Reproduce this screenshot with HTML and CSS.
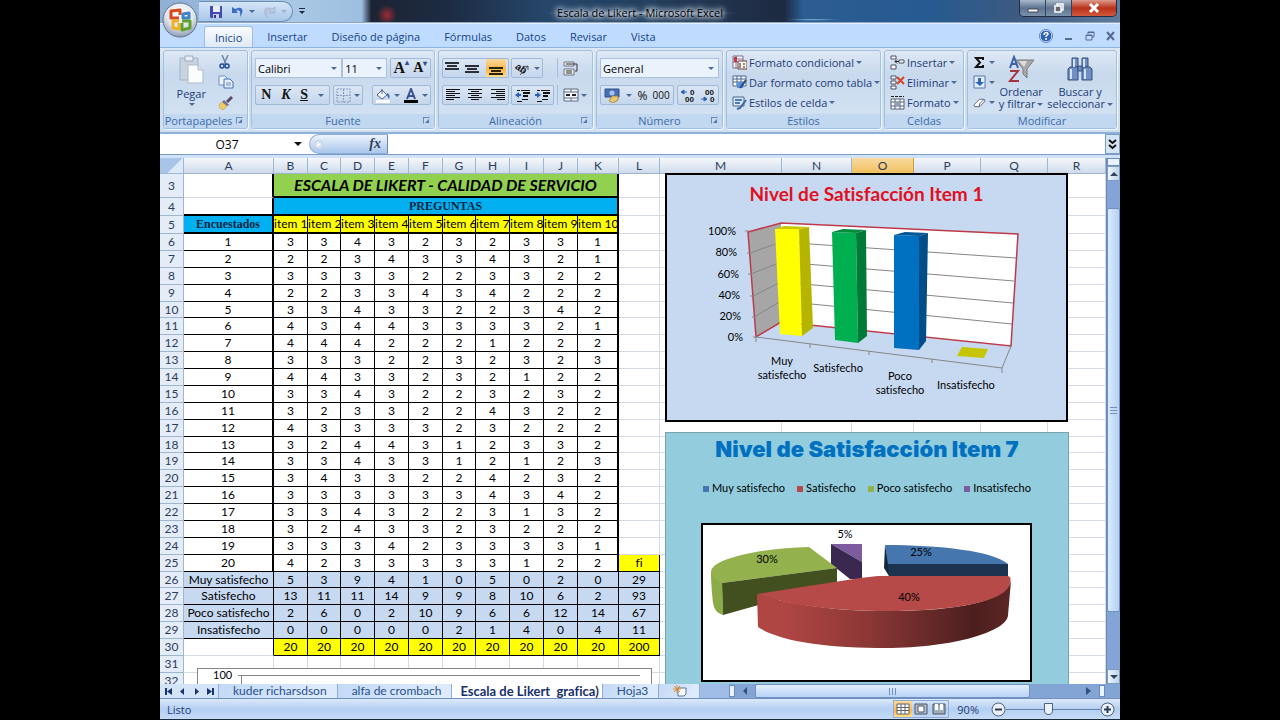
FILE: index.html
```html
<!DOCTYPE html>
<html lang="es">
<head>
    <meta charset="UTF-8">
    <title>Escala de Likert - Microsoft Excel</title>
    <link rel="stylesheet" href="styles.css">
</head>
<body>
<div class="window">
    <header class="titlebar">
        <button class="office" aria-label="Botón de Office">
            <svg width="36" height="36" viewBox="0 0 36 36">
                <defs>
                    <radialGradient id="orb" cx=".5" cy=".3" r=".7"><stop offset="0" stop-color="#fff"/><stop offset=".6" stop-color="#dfe3ea"/><stop offset="1" stop-color="#8e9cb4"/></radialGradient>
                </defs>
                <circle cx="18" cy="18" r="17" fill="url(#orb)" stroke="#5f7291"/>
                <g fill="none" stroke-width="3" stroke-linejoin="round">
                    <path d="M17 16H9V9l9-1v5" stroke="#d8481c"/>
                    <path d="M20 16h7v-5l-6 1v5" stroke="#3f83c8"/>
                    <path d="M17 19h-6v7l6 1v-6" stroke="#f0b020"/>
                    <path d="M20 19h8v7l-8 2v-7" stroke="#5fa12c"/>
                </g>
            </svg>
        </button>
        <div class="quick">
            <button aria-label="Guardar"><svg width="14" height="14" viewBox="0 0 14 14"><path d="M1 1h12v12H2l-1-1z" fill="#4248b0"/><path d="M4 1h7v6H4z" fill="#e8eefa"/><path d="M4 9h6v4H4z" fill="#c9d2ea"/><path d="M5 10h2v3H5z" fill="#32388c"/></svg></button>
            <button aria-label="Deshacer"><svg width="13" height="12" viewBox="0 0 13 12"><path d="M1 1v6h6L5 5c3-2 5 0 4 6 4-5 3-10-2-9L4 3z" fill="#3b6cc4"/></svg></button>
            <i class="arrow"></i>
            <button aria-label="Rehacer"><svg width="13" height="12" viewBox="0 0 13 12"><path d="M12 1v6H6l2-2C5 3 3 5 4 11 0 6 1 1 6 2l3 1z" fill="#b9c8de" stroke="#8fa3c2" stroke-width=".5"/></svg></button>
            <i class="arrow dim"></i>
        </div>
        <button class="more" aria-label="Personalizar barra"><i class="arrow"></i></button>
        <h1>Escala de Likert - Microsoft Excel</h1>
        <div class="winbtns">
            <button aria-label="Minimizar"><svg width="12" height="12" viewBox="0 0 12 12"><path d="M1 7h10v3H1z" fill="#fff" stroke="#445"/></svg></button>
            <button aria-label="Restaurar"><svg width="12" height="12" viewBox="0 0 12 12"><path d="M4 2h6v6H4z" fill="none" stroke="#fff" stroke-width="1.5"/><path d="M2 4h6v6H2z" fill="#667" stroke="#fff" stroke-width="1.5"/></svg></button>
            <button class="close" aria-label="Cerrar"><svg width="12" height="12" viewBox="0 0 12 12"><path d="M2 2l8 8M10 2l-8 8" stroke="#fff" stroke-width="3"/></svg></button>
        </div>
    </header>

    <nav class="tabs">
        <button class="active">Inicio</button>
        <button>Insertar</button>
        <button>Diseño de página</button>
        <button>Fórmulas</button>
        <button>Datos</button>
        <button>Revisar</button>
        <button>Vista</button>
        <div class="docbtns">
            <button aria-label="Ayuda"><svg width="14" height="14" viewBox="0 0 14 14"><circle cx="7" cy="7" r="6" fill="#2c62b8" stroke="#fff"/><circle cx="7" cy="7" r="6.5" fill="none" stroke="#5a82bd"/><path d="M5 6c0-3 4-3 4-1 0 1-2 1-2 3M7 9v2" fill="none" stroke="#fff" stroke-width="1.5"/></svg></button>
            <button aria-label="Minimizar libro"><svg width="10" height="10" viewBox="0 0 10 10"><path d="M1 8h7" stroke="#566b8c" stroke-width="2"/></svg></button>
            <button aria-label="Restaurar libro"><svg width="10" height="10" viewBox="0 0 10 10"><path d="M3 3V1h6v5H7M1 4h6v5H1zM1 4.5h6M3 1.5h6" fill="none" stroke="#566b8c"/></svg></button>
            <button aria-label="Cerrar libro"><svg width="10" height="10" viewBox="0 0 10 10"><path d="M1 1l7 8M8 1L1 9" stroke="#566b8c" stroke-width="2"/></svg></button>
        </div>
    </nav>

    <div class="ribbon">
        <section class="group">
            <div class="body clip">
                <button class="big">
                    <svg width="26" height="30" viewBox="0 0 26 30"><path d="M2 3h18v22H2z" fill="#c9d3e0" stroke="#a5b3c6"/><path d="M7 1h8v5H7z" fill="#e9eef5" stroke="#9aa9bd"/><path d="M10 10h10l5 5v13H10z" fill="#fbfcfe" stroke="#a9b8cc"/><path d="M20 10v5h5" fill="#dde5ef" stroke="#a9b8cc"/></svg>
                    <span>Pegar</span>
                    <i class="arrow"></i>
                </button>
                <div class="stack">
                    <button aria-label="Cortar"><svg width="14" height="14" viewBox="0 0 14 14"><path d="M4 0l4 9M10 0L6 9" stroke="#6f86ad" stroke-width="1.5"/><circle cx="4" cy="11" r="2" fill="none" stroke="#1f4a9c" stroke-width="1.5"/><circle cx="9" cy="11" r="2" fill="none" stroke="#1f4a9c" stroke-width="1.5"/></svg></button>
                    <button aria-label="Copiar"><svg width="16" height="14" viewBox="0 0 16 14"><path d="M1 1h6l2 2v7H1z" fill="#eef4fc" stroke="#6f8fc4"/><path d="M6 4h6l3 3v6H6z" fill="#e4edfb" stroke="#4670b5"/><path d="M8 8h5M8 10h5" stroke="#6f8fc4"/></svg></button>
                    <button aria-label="Copiar formato"><svg width="15" height="14" viewBox="0 0 15 14"><path d="M14 1l-5 5" stroke="#5a4a70" stroke-width="3"/><path d="M6 4l5 5-2 1-5-4z" fill="#6c6c8c"/><path d="M4 6l5 4-4 4c-2-1-4-2-4-5z" fill="#f0cc62" stroke="#a8853a" stroke-width=".5"/></svg></button>
                </div>
            </div>
            <h2>Portapapeles<i class="launch"></i></h2>
        </section>

        <section class="group">
            <div class="body lines">
                <div class="line">
                    <label class="combo grow2"><select aria-label="Fuente"><option>Calibri</option></select></label>
                    <label class="combo grow1"><select aria-label="Tamaño"><option>11</option></select></label>
                    <div class="box gapped">
                        <button class="serif lg" aria-label="Aumentar fuente">A<sup>▴</sup></button>
                        <button class="serif sm" aria-label="Disminuir fuente">A<sup>▾</sup></button>
                    </div>
                </div>
                <div class="line">
                    <div class="box wide">
                        <button class="serif">N</button>
                        <button class="serif it">K</button>
                        <button class="serif un">S</button>
                        <i class="arrow"></i>
                    </div>
                    <div class="box">
                        <button aria-label="Bordes"><svg width="15" height="15" viewBox="0 0 15 15"><path d="M1 1h13v13H1zM7.5 1v13M1 7.5h13" fill="none" stroke="#8299bb" stroke-dasharray="2 1"/></svg></button>
                        <i class="arrow"></i>
                    </div>
                    <div class="box push">
                        <button aria-label="Color de relleno"><svg width="16" height="15" viewBox="0 0 16 15"><path d="M1 12h14v3H1z" fill="#fff"/><path d="M7 2l5 5-5 4-5-4z" fill="#f2f5fa" stroke="#52658a"/><path d="M7 6V1" stroke="#52658a"/><path d="M12 5c3 1 3 4 2 6-1-2-2-3-2-6z" fill="#3468b8"/></svg></button>
                        <i class="arrow"></i>
                        <button aria-label="Color de fuente"><svg width="16" height="15" viewBox="0 0 16 15"><path d="M1 12h14v3H1z" fill="#000"/><path d="M4 11L8 1l4 10M5.5 8h5" fill="none" stroke="#3a4f94" stroke-width="2"/></svg></button>
                        <i class="arrow"></i>
                    </div>
                </div>
            </div>
            <h2>Fuente<i class="launch"></i></h2>
        </section>

        <section class="group">
            <div class="body split">
                <div class="lines">
                    <div class="line">
                        <div class="box three">
                            <button aria-label="Alinear arriba"><svg width="14" height="13" viewBox="0 0 14 13"><path d="M0 1h14M2 4h10M0 7h14" stroke="#2a2f38" stroke-width="2"/></svg></button>
                            <button aria-label="Alinear en el medio"><svg width="14" height="13" viewBox="0 0 14 13"><path d="M0 4h14M2 7h10M0 10h14" stroke="#2a2f38" stroke-width="2"/></svg></button>
                            <button class="on" aria-label="Alinear abajo"><svg width="14" height="13" viewBox="0 0 14 13"><path d="M0 6h14M2 9h10M0 12h14" stroke="#2a2208" stroke-width="2"/></svg></button>
                        </div>
                        <div class="box">
                            <button class="tilt" aria-label="Orientación"><svg width="17" height="16" viewBox="0 0 17 16"><text x="1" y="10" font-size="10" transform="rotate(35 4 8)">ab</text><path d="M6 15l8-9M14 6v4M14 6l-4 1" stroke="#555" fill="none"/></svg></button>
                            <i class="arrow"></i>
                        </div>
                    </div>
                    <div class="line">
                        <div class="box three">
                            <button aria-label="Izquierda"><svg width="14" height="12" viewBox="0 0 14 12"><path d="M0 .5h14M0 2.5h9M0 4.5h14M0 6.5h9M0 8.5h14M0 10.5h8" stroke="#111"/></svg></button>
                            <button aria-label="Centrar"><svg width="14" height="12" viewBox="0 0 14 12"><path d="M0 .5h14M3 2.5h8M0 4.5h14M3 6.5h8M0 8.5h14M3 10.5h8" stroke="#111"/></svg></button>
                            <button aria-label="Derecha"><svg width="14" height="12" viewBox="0 0 14 12"><path d="M0 .5h14M5 2.5h9M0 4.5h14M5 6.5h9M0 8.5h14M6 10.5h8" stroke="#111"/></svg></button>
                        </div>
                        <div class="box two">
                            <button aria-label="Disminuir sangría"><svg width="15" height="13" viewBox="0 0 15 13"><path d="M2 1.500h3M6 1.5h9M7 10.5h6M2 12.5h5" stroke="#111"/><path d="M8 4h7M8 7h5" stroke="#111" stroke-width="2"/><path d="M0 6l4-3v2h2v2H4v2z" fill="#2d5fb4"/></svg></button>
                            <button aria-label="Aumentar sangría"><svg width="15" height="13" viewBox="0 0 15 13"><path d="M2 1.5h3M6 1.5h9M7 10.5h6M2 12.5h5" stroke="#111"/><path d="M8 4h7M8 7h5" stroke="#111" stroke-width="2"/><path d="M6 6L2 3v2H0v2h2v2z" fill="#2d5fb4"/></svg></button>
                        </div>
                    </div>
                </div>
                <div class="lines sep">
                    <div class="line"><button aria-label="Ajustar texto"><svg width="16" height="15" viewBox="0 0 16 15"><path d="M1 1h10v4H1zM1 8h10v6H1z" fill="#f2efe6" stroke="#6a768c"/><path d="M3 3h11M3 10h6M3 12h6M14 3v7h-2" stroke="#333" fill="none"/></svg></button></div>
                    <div class="line"><button aria-label="Combinar y centrar"><svg width="16" height="14" viewBox="0 0 16 14"><path d="M1 1h14v12H1z" fill="#f5f7fa" stroke="#5c6b85"/><path d="M1 4h14M1 10h14M8 1v3M8 10v3" stroke="#5c6b85"/><path d="M3 7h4M9 7h4" stroke="#222" stroke-width="2"/></svg></button><i class="arrow"></i></div>
                </div>
            </div>
            <h2>Alineación<i class="launch"></i></h2>
        </section>

        <section class="group">
            <div class="body lines">
                <div class="line"><label class="combo grow1"><select aria-label="Formato de número"><option>General</option></select></label></div>
                <div class="line">
                    <div class="box wide">
                        <button aria-label="Moneda"><svg width="17" height="15" viewBox="0 0 17 15"><path d="M1 1h14v8H1z" fill="#4470b8" stroke="#2f4f86"/><circle cx="8" cy="5" r="2.5" fill="#a9c4ec"/><path d="M8 8h6v4l-5 3-4-2z" fill="#e8c66a" stroke="#94753a" stroke-width=".7"/></svg></button>
                        <i class="arrow"></i>
                        <button class="num">%</button>
                        <button class="num narrow">000</button>
                    </div>
                    <div class="box two push">
                        <button aria-label="Aumentar decimales"><svg width="16" height="15" viewBox="0 0 16 15"><text x="10" y="7" font-size="8">0</text><text x="5" y="14" font-size="8">00</text><path d="M1 4l3-2v4zM3 4h4" fill="#2d5fb4" stroke="#2d5fb4"/></svg></button>
                        <button aria-label="Disminuir decimales"><svg width="16" height="15" viewBox="0 0 16 15"><text x="5" y="7" font-size="8">00</text><text x="10" y="14" font-size="8">0</text><path d="M7 11l-3-2v4zM1 11h4" fill="#2d5fb4" stroke="#2d5fb4"/></svg></button>
                    </div>
                </div>
            </div>
            <h2>Número<i class="launch"></i></h2>
        </section>

        <section class="group">
            <div class="body menu">
                <button><svg width="15" height="15" viewBox="0 0 15 15"><path d="M1 1h10v12H1zM1 4h10M1 7h10M4 1v12" fill="#fff" stroke="#7a6a90"/><path d="M2 2h3v5H2z" fill="#c9333c"/><path d="M6 6h9v8H6z" fill="#fdf6ee" stroke="#6a3a3a"/><path d="M8 8v5M11 9h2M11 12h2" stroke="#222"/></svg>Formato condicional<i class="arrow"></i></button>
                <button><svg width="15" height="15" viewBox="0 0 15 15"><path d="M1 1h13v10H1z" fill="#fff" stroke="#4c648c"/><path d="M1 4h13M1 7h13M5 1v10M9 1v10" stroke="#4c648c"/><path d="M5 7h8l-2 6H5z" fill="#5b92d8"/><path d="M14 5l-6 8" stroke="#2b4a80" stroke-width="2"/></svg>Dar formato como tabla<i class="arrow"></i></button>
                <button><svg width="15" height="15" viewBox="0 0 15 15"><path d="M1 2h11v9H1z" fill="#dbe8fa" stroke="#4c648c"/><path d="M3 5h7M3 8h5" stroke="#4c7cc4" stroke-width="2"/><path d="M14 5l-6 8-3 1" stroke="#3b64a8" stroke-width="2" fill="none"/></svg>Estilos de celda<i class="arrow"></i></button>
            </div>
            <h2>Estilos</h2>
        </section>

        <section class="group">
            <div class="body menu">
                <button><svg width="15" height="15" viewBox="0 0 15 15"><path d="M1 1h5v3H1zM1 10h5v4H1zM9 5h5v3H9z" fill="#fff" stroke="#444f66"/><path d="M5 6.5h4M5 6.5l2-2M5 6.5l2 2" stroke="#222" fill="none"/></svg>Insertar<i class="arrow"></i></button>
                <button><svg width="15" height="15" viewBox="0 0 15 15"><path d="M1 1h5v3H1zM1 6h5v3H1zM1 11h5v3H1z" fill="#fff" stroke="#444f66"/><path d="M7 2l7 7M14 2L7 9" stroke="#d8432c" stroke-width="2"/></svg>Eliminar<i class="arrow"></i></button>
                <button><svg width="15" height="15" viewBox="0 0 15 15"><path d="M1 4h13v10H1zM1 7h13M1 11h13M5 4v10M10 4v10" fill="#fff" stroke="#56627a"/><path d="M1 1.5h13" stroke="#222" stroke-dasharray="3 1"/><path d="M5 7h5v4H5z" fill="#8da0b8"/></svg>Formato<i class="arrow"></i></button>
            </div>
            <h2>Celdas</h2>
        </section>

        <section class="group">
            <div class="body clip edit">
                <div class="stack">
                    <button aria-label="Autosuma"><svg width="13" height="13" viewBox="0 0 13 13"><path d="M10 4V2H3l4 4.5L3 11h7V9" fill="none" stroke="#111" stroke-width="2"/></svg><i class="arrow"></i></button>
                    <button aria-label="Rellenar"><svg width="13" height="14" viewBox="0 0 13 14"><path d="M1 1h11v12H1z" fill="#e3eefc" stroke="#5577ae"/><path d="M5 3h3v4h3l-4 4-5-4h3z" fill="#2e65bd"/></svg><i class="arrow"></i></button>
                    <button aria-label="Borrar"><svg width="13" height="12" viewBox="0 0 14 12"><path d="M1 8l6-6h5l1 2-6 6H2z" fill="#fff" stroke="#55617a"/><path d="M7 10V7l5-5" fill="none" stroke="#55617a"/></svg><i class="arrow"></i></button>
                </div>
                <button class="big">
                    <svg width="28" height="28" viewBox="0 0 28 28"><path d="M3 13L7 2l4 11M4 9h6" fill="none" stroke="#3a62b0" stroke-width="2"/><path d="M3 16h8L3 26h9" fill="none" stroke="#a8323c" stroke-width="2"/><path d="M9 5h18l-7 9v9l-4-4v-5z" fill="#a8a8a8" stroke="#7c7c7c"/><path d="M12 6h8l-3 6z" fill="#dedede"/></svg>
                    <span>Ordenar<br>y filtrar<i class="arrow"></i></span>
                </button>
                <button class="big">
                    <svg width="28" height="28" viewBox="0 0 28 28"><g fill="#6f8fc4" stroke="#35507f"><path d="M6 3h6v9H6zM16 3h6v9h-6z"/><path d="M4 12h8v13H2V14zM16 12h8l2 2v11H16z"/><path d="M12 11h4v5h-4z"/></g><path d="M8 4v8M5 14v10M18 4v8M19 14v10" stroke="#d5e1f6" stroke-width="2"/></svg>
                    <span>Buscar y<br>seleccionar<i class="arrow"></i></span>
                </button>
            </div>
            <h2>Modificar</h2>
        </section>
    </div>

    <div class="formula">
        <input class="name" value="O37" aria-label="Cuadro de nombres">
        <i class="arrow dark"></i>
        <button class="fx" aria-label="Insertar función"><b></b><em>fx</em></button>
        <input class="bar" value="" aria-label="Barra de fórmulas">
        <button class="expand" aria-label="Expandir"><svg width="9" height="11" viewBox="0 0 9 11"><path d="M1 1l3.500 3L8 1M1 6l3.500 3L8 6" fill="none" stroke="#111" stroke-width="2"/></svg></button>
    </div>

    <main class="workspace">
        <div class="sheet">
            <table>
                <colgroup>
                    <col class="c-head"><col class="c-a">
                    <col class="c-34"><col class="c-33"><col class="c-34"><col class="c-34"><col class="c-34"><col class="c-33"><col class="c-34"><col class="c-34"><col class="c-34">
                    <col class="c-k"><col class="c-k"><col class="c-m"><col class="c-n"><col class="c-o"><col class="c-p"><col class="c-p"><col>
                </colgroup>
                <thead>
                    <tr id="letters"></tr>
                </thead>
                <tbody id="rows"></tbody>
            </table>

            <figure class="chart chart-line">
                <svg width="100%" height="16"><text x="15" y="10">100</text><path d="M40 6.5h402M43.5 6v10" stroke="#868686" fill="none"/></svg>
            </figure>

            <figure class="chart chart-bars">
                <h3>Nivel de Satisfacción Item 1</h3>
                <svg viewBox="2 2 400 245" width="400" height="245">
                    <path d="M83 59l33-9v99l-25 15z" fill="#a6a6a6"/>
                    <path d="M116 50l237 11-7 112-230-24z" fill="#fff"/>
                    <path d="M85 80l31-11 235 16M86 101l30-12 233 19M88 123l28-14 232 21M89 144l27-16 231 23" fill="none" stroke="#868686"/>
                    <path d="M83 59l33-9 237 11-7 112-230-24-25 15z" fill="none" stroke="#be3a48" stroke-width="1.5"/>
                    <path d="M91 164l246 31 9-22M91 164v5M145 171v4M204 178v4M267 186v4M337 195v5M80 58h4M82 80h4M83 101h4M85 123h4M87 144h4M88 164h4" fill="none" stroke="#868686"/>
                    <path d="M110 56h24l3 107-22-2z" fill="#ff0"/>
                    <path d="M134 56l10-2 4 101-11 8z" fill="#b5b500"/>
                    <path d="M110 56l9-3 25 1-10 2z" fill="#c8c800"/>
                    <path d="M167 59l24 1 2 110-23-3z" fill="#00b050"/>
                    <path d="M191 60l10-3 1 106-9 7z" fill="#007a38"/>
                    <path d="M167 59l11-3 23 1-10 3z" fill="#008a3e"/>
                    <path d="M229 62l25 1v114l-25-2z" fill="#0070c0"/>
                    <path d="M254 63l9-3-2 108-7 9z" fill="#004e88"/>
                    <path d="M229 62l11-3 23 1-9 3z" fill="#005696"/>
                    <path d="M297 174l26 2-4 9-27-2z" fill="#c6c600"/>
                    <g text-anchor="end">
                        <text x="71" y="62">100%</text>
                        <text x="72" y="83">80%</text>
                        <text x="74" y="105">60%</text>
                        <text x="75" y="126">40%</text>
                        <text x="76" y="147">20%</text>
                        <text x="78" y="168">0%</text>
                    </g>
                    <g text-anchor="middle">
                        <text x="117" y="192">Muy</text>
                        <text x="117" y="206">satisfecho</text>
                        <text x="173" y="199">Satisfecho</text>
                        <text x="235" y="207">Poco</text>
                        <text x="235" y="221">satisfecho</text>
                        <text x="301" y="216">Insatisfecho</text>
                    </g>
                </svg>
            </figure>

            <figure class="chart chart-pie">
                <h3>Nivel de Satisfacción Item 7</h3>
                <ul class="legend">
                    <li class="l-blue">Muy satisfecho</li>
                    <li class="l-red">Satisfecho</li>
                    <li class="l-green">Poco satisfecho</li>
                    <li class="l-purple">Insatisfecho</li>
                </ul>
                <svg viewBox="1 1 402 252" width="402" height="252">
                    <defs>
                        <linearGradient id="redside"><stop offset=".1" stop-color="#b04644"/><stop offset=".45" stop-color="#8a3735"/><stop offset=".85" stop-color="#4c1f1e"/><stop offset="1" stop-color="#5c2625"/></linearGradient>
                    </defs>
                    <path d="M37 92h329v157H37z" fill="#fff" stroke="#000" stroke-width="2"/>
                    <path d="M220 113l4 19v12l-5-8z" fill="#16283c"/>
                    <path d="M220 113c55 0 108 6 123 19H223z" fill="#4676ae"/>
                    <path d="M223 132h120v13H224z" fill="#1c3450"/>
                    <path d="M166 112h31v18z" fill="#7d5b9f"/>
                    <path d="M166 112l31 18v17h-12l-19-15z" fill="#3a2850"/>
                    <path d="M46 140l11 11 1 32c-7-2-9-7-10-12-1-8-2-22-2-31z" fill="#8bab49"/>
                    <path d="M144 115l28 21-115 15c-6-3-11-7-11-11 0-14 52-24 98-25z" fill="#93b14d"/>
                    <path d="M57 151l115-15v15L58 183z" fill="#42501f"/>
                    <path d="M92 162l1 33c22 15 72 21 128 21 68 0 122-17 122-33l3-34c-6 20-50 30-125 30-50 0-100-7-129-17z" fill="url(#redside)"/>
                    <path d="M92 162l103-16 18-2h129c4 0 4 3 3 7-3 19-57 28-124 28-50 0-100-6-129-17z" fill="#b54a48"/>
                    <g text-anchor="middle">
                        <text x="256" y="124">25%</text>
                        <text x="102" y="131">30%</text>
                        <text x="180" y="106">5%</text>
                        <text x="244" y="169">40%</text>
                    </g>
                </svg>
            </figure>
        </div>
        <div class="vscroll">
            <i class="splitter"></i>
            <button class="up" aria-label="Subir"><i></i></button>
            <div class="track"><div class="thumb"></div></div>
            <button class="down" aria-label="Bajar"><i></i></button>
        </div>
    </main>

    <div class="sheetbar">
        <div class="nav">
            <button aria-label="Primera hoja"><svg width="9" height="9" viewBox="0 0 9 9"><path d="M1 1h2v7H1zM8 1v7L3 4.500z"/></svg></button>
            <button aria-label="Hoja anterior"><svg width="9" height="9" viewBox="0 0 9 9"><path d="M6 1v7L2 4.500z"/></svg></button>
            <button aria-label="Hoja siguiente"><svg width="9" height="9" viewBox="0 0 9 9"><path d="M3 1v7l4-3.500z"/></svg></button>
            <button aria-label="Última hoja"><svg width="9" height="9" viewBox="0 0 9 9"><path d="M6 1h2v7H6zM1 1v7l5-3.500z"/></svg></button>
        </div>
        <div class="sheets">
            <button>kuder richarsdson</button>
            <button>alfa de crombach</button>
            <button class="active">Escala de Likert&nbsp; grafica)</button>
            <button>Hoja3</button>
            <button aria-label="Insertar hoja"><svg width="16" height="12" viewBox="0 0 16 12"><path d="M5 3h8v6l-2 2H5z" fill="#fff" stroke="#56719c"/><path d="M4 0v8M0 4h8M1 1l6 6M7 1L1 7" stroke="#e08a2c"/></svg></button>
        </div>
        <div class="hscroll">
            <i class="handle"></i>
            <i class="left"></i>
            <div class="track"><div class="thumb"></div></div>
            <i class="right"></i>
            <i class="handle"></i>
        </div>
    </div>

    <footer class="status">
        <span>Listo</span>
        <div class="views">
            <button class="on" aria-label="Normal"><svg width="14" height="12" viewBox="0 0 14 12"><path d="M1 1h12v10H1zM5 1v10M9 1v10M1 4.5h12M1 7.5h12" fill="#fff" stroke="#5d6470"/></svg></button>
            <button aria-label="Diseño de página"><svg width="14" height="12" viewBox="0 0 14 12"><path d="M1 1h12v10H1z" fill="#b4bfce" stroke="#4b5565"/><path d="M4 3h6v6H4z" fill="#fff" stroke="#4b5565"/></svg></button>
            <button aria-label="Salto de página"><svg width="14" height="12" viewBox="0 0 14 12"><path d="M1 1h12v10H1z" fill="#a0adbf" stroke="#4b5565"/><path d="M3 1h3v6H3zM8 1h3v6H8z" fill="#fff"/></svg></button>
        </div>
        <label class="pct" for="zoom">90%</label>
        <button class="round" aria-label="Alejar"><svg width="15" height="15" viewBox="0 0 15 15"><circle cx="7.5" cy="7.5" r="6.5" fill="#e9eff8" stroke="#4d617f"/><path d="M4 7.5h7" stroke="#2c3c57" stroke-width="2"/></svg></button>
        <input id="zoom" type="range" min="0" max="100" value="45">
        <button class="round" aria-label="Acercar"><svg width="15" height="15" viewBox="0 0 15 15"><circle cx="7.5" cy="7.5" r="6.5" fill="#e9eff8" stroke="#4d617f"/><path d="M4 7.5h7M7.5 4v7" stroke="#2c3c57" stroke-width="2"/></svg></button>
    </footer>
</div>

<script>
    const answers = [
        '3343232331', '2234334321', '3333223322', '2233434222', '3343322342',
        '4344333321', '4442221222', '3332232323', '4433232122', '3343223232',
        '3233224322', '4333323222', '3244312332', '3343312123', '3433224232',
        '3333334342', '3343223132', '3243323222', '3334233331', '4233333122'
    ];
    const totals = [
        ['Muy satisfecho', 5, 3, 9, 4, 1, 0, 5, 0, 2, 0, 29],
        ['Satisfecho', 13, 11, 11, 14, 9, 9, 8, 10, 6, 2, 93],
        ['Poco satisfecho', 2, 6, 0, 2, 10, 9, 6, 6, 12, 14, 67],
        ['Insatisfecho', 0, 0, 0, 0, 0, 2, 1, 4, 0, 4, 11]
    ];
    const rest = '<td></td>'.repeat(6);

    function cells(list) {
        return list.map(v => `<td>${v}</td>`).join('');
    }

    function row(n, cls, html) {
        return `<tr class="${cls}"><th>${n}</th>${html}</tr>`;
    }

    document.getElementById('letters').innerHTML = '<th class="corner"></th>' +
        [...'ABCDEFGHIJKLMNOPQR'].map(c => `<th${c === 'O' ? ' class="sel"' : ''}>${c}</th>`).join('');

    let html = '';
    html += row(3, 'r-title', '<td></td><td colspan="10">ESCALA DE LIKERT - CALIDAD DE SERVICIO</td><td></td>' + rest);
    html += row(4, 'r-sub', '<td></td><td colspan="10">PREGUNTAS</td><td></td>' + rest);
    const items = answers[0].split('').map((v, i) => 'item ' + (i + 1));
    html += row(5, 'r-items', cells(['Encuestados', ...items, '']) + rest);
    answers.forEach((a, i) => {
        const last = i === answers.length - 1;
        html += row(i + 6, last ? 'r-data last' : 'r-data', cells([i + 1, ...a, last ? 'fi' : '']) + rest);
    });
    totals.forEach((t, i) => {
        html += row(i + 26, 'r-total', cells(t) + rest);
    });
    html += row(30, 'r-sum', cells(['', ...Array(10).fill(20), 200]) + rest);
    html += row(31, '', cells(Array(12).fill('')) + rest);
    html += row(32, '', cells(Array(12).fill('')) + rest);
    document.getElementById('rows').innerHTML = html;
</script>
</body>
</html>
```
FILE: styles.css
```css
* {
    box-sizing: border-box;
}
body {
    margin: 0;
    height: 100vh;
    padding: 0 12.5%;
    background: #000;
    font-family: "Open Sans", "Noto Sans", sans-serif;
    font-size: 11px;
    font-variant-ligatures: none;
    color: #1e3c78;
    overflow: hidden;
}
button, input, select {
    font: inherit;
    color: inherit;
    background: none;
    border: 0;
    padding: 0;
    margin: 0;
}
button {
    display: flex;
    align-items: center;
    justify-content: center;
    white-space: nowrap;
}
svg {
    display: block;
    flex: none;
}
h1, h2, h3, ul, figure {
    margin: 0;
    padding: 0;
    font-weight: normal;
}
.window {
    display: flex;
    flex-direction: column;
    height: 100%;
    background: #bfdbff;
    border-bottom: 1px solid #1c2a3e;
}
.arrow {
    display: inline-block;
    flex: none;
    border: 3px solid transparent;
    border-top-color: #4d6a94;
    border-bottom-width: 0;
}
.arrow.dim {
    border-top-color: #9fb0ca;
}
.arrow.dark {
    border-width: 4px;
    border-bottom-width: 0;
    border-top-color: #111;
}

/* title bar */
.titlebar {
    position: relative;
    display: flex;
    height: 23px;
    flex: none;
    border-bottom: 1px solid #8da6c4;
    background:
        radial-gradient(circle at 227px 15px, #a02a34 0, transparent 10px),
        radial-gradient(ellipse at 68% 90%, #8cc4ee 0, transparent 28px),
        radial-gradient(ellipse at 50% 60%, #7d8fa8 0, #5c7190 40px, transparent 100px),
        linear-gradient(90deg, #8fb0d4 0, #a9c8e6 14%, #9dbfe0 21%, #1c2434 22%, #1d2b42 30%, #26466a 40%, #24405f 50%, #1d2a40 65%, #2c5c92 67%, #265a90 80%, #3f5a80 90%, #5f7c9f 100%);
}
.office {
    position: absolute;
    left: 2px;
    top: 2px;
    z-index: 2;
}
.quick {
    display: flex;
    align-items: center;
    gap: 8px;
    width: 94px;
    height: 21px;
    margin: 1px 0 0 39px;
    padding-left: 10px;
    border: 1px solid #6d8db5;
    border-left: 0;
    border-radius: 0 11px 11px 0;
    background: linear-gradient(#d5e5f7, #a9c6e8);
}
.quick .arrow {
    margin-left: -3px;
}
.more {
    align-self: center;
    margin-left: 6px;
    padding-top: 2px;
    border-top: 1px solid #1c2c48;
}
.more .arrow {
    border-top-color: #1c2c48;
}
.titlebar h1 {
    position: absolute;
    left: 0;
    right: 0;
    top: 4px;
    text-align: center;
    line-height: 18px;
    font-size: 11px;
    color: #000;
    text-shadow: 0 0 4px #fff, 0 0 6px #d5e0ee, 0 0 8px #c0d0e4, 0 0 8px #c0d0e4;
}
.winbtns {
    display: flex;
    height: 17px;
    margin: 0 3px 0 auto;
    border: 1px solid #1f2c42;
    border-top: 0;
    border-radius: 0 0 5px 5px;
    overflow: hidden;
    z-index: 1;
}
.winbtns button {
    width: 26px;
    background: linear-gradient(#a9b9cc, #5d7390 50%, #7b90aa);
    border-right: 1px solid #35455e;
}
.winbtns .close {
    width: 44px;
    border-right: 0;
    background: linear-gradient(#dd9a8c, #b8321c 50%, #d2593c);
}

/* ribbon tabs */
.tabs {
    display: flex;
    height: 24px;
    flex: none;
    padding-left: 44px;
    border-top: 1px solid #e3f0ff;
}
.tabs > button {
    padding: 0 12px;
    margin-top: 2px;
    color: #15428b;
}
.tabs > button.active {
    padding: 0 10px;
    margin-right: 2px;
    background: linear-gradient(#f7fbff, #dfe9f5);
    border: 1px solid #9fbde2;
    border-bottom: 0;
    border-radius: 3px 3px 0 0;
}
.docbtns {
    display: flex;
    gap: 11px;
    align-items: center;
    margin-left: auto;
    padding-right: 4px;
}

/* ribbon */
.ribbon {
    display: grid;
    grid-template-columns: 85fr 184fr 155fr 127fr 155fr 80fr 150fr;
    gap: 3px;
    flex: none;
    height: 87px;
    padding: 2px 3px 3px;
    background: linear-gradient(#dce7f4, #c9daee 30%, #cfdff1);
    border-top: 1px solid #8db2e3;
    border-bottom: 2px solid #8fb0d8;
}
.group {
    display: flex;
    flex-direction: column;
    min-width: 0;
    border: 1px solid #a3bfdf;
    border-radius: 3px;
    background: linear-gradient(#dee8f5, #c8d9ed 30%, #d4e4f4);
    box-shadow: 1px 1px #f0f6fd;
}
.group h2 {
    position: relative;
    height: 14px;
    line-height: 14px;
    font-size: 11px;
    text-align: center;
    color: #3e6aaa;
    background: #c1d8f0;
}
.launch {
    position: absolute;
    right: 4px;
    top: 3px;
    width: 7px;
    height: 7px;
    border: 1px solid #6b8cba;
    border-right-color: transparent;
    border-bottom-color: transparent;
}
.launch::after {
    content: "";
    position: absolute;
    right: 0;
    bottom: 0;
    border: 2px solid #5375a8;
    border-left-color: transparent;
    border-top-color: transparent;
}
.group:first-child h2 {
    padding-right: 14px;
}
.body {
    flex: 1;
    min-height: 0;
}
.clip {
    display: flex;
    justify-content: space-evenly;
}
.edit {
    justify-content: space-between;
    padding: 0 3px 0 5px;
}
.big {
    flex-direction: column;
    justify-content: flex-start;
    gap: 3px;
    padding-top: 4px;
    line-height: 12px;
}
.big .arrow {
    margin-left: 2px;
    vertical-align: 2px;
}
.stack {
    display: flex;
    flex-direction: column;
    justify-content: space-around;
    padding: 1px 0;
}
.stack button {
    gap: 3px;
    height: 18px;
    justify-content: flex-start;
}
.lines {
    display: flex;
    flex-direction: column;
    gap: 7px;
    padding: 7px 3px 0;
}
.line {
    display: flex;
    align-items: center;
    gap: 3px;
    height: 20px;
}
.split {
    display: flex;
    gap: 3px;
}
.split .lines {
    padding-right: 0;
}
.split .line {
    gap: 2px;
}
.split .sep {
    padding-left: 0;
}
.sep .line {
    padding-left: 5px;
    border-left: 1px solid #a3bfdf;
}
.combo {
    position: relative;
    height: 20px;
    background: #eaf2fb;
    border: 1px solid #abc1de;
}
.combo + .combo {
    margin-left: -3px;
}
.combo select {
    width: 100%;
    height: 18px;
    padding-left: 2px;
    appearance: none;
    color: #000;
}
.combo::after {
    content: "";
    position: absolute;
    right: 4px;
    top: 8px;
    border: 3px solid transparent;
    border-top-color: #4d6a94;
    border-bottom: 0;
}
.grow1 {
    flex: 1;
}
.grow2 {
    flex: 2;
}
.box {
    display: flex;
    align-items: center;
    justify-content: space-around;
    height: 20px;
    padding: 0 2px;
    gap: 3px;
    border: 1px solid #9fb9da;
    border-radius: 2px;
    background: linear-gradient(#dbe6f4, #c5d6ec);
}
.box.gapped {
    width: 41px;
}
.box.wide {
    width: 75px;
}
.box.three {
    width: 67px;
    padding: 0;
}
.box.two {
    width: 43px;
}
.push {
    margin-left: auto;
}
.on {
    align-self: stretch;
    padding: 0 3px;
    background: linear-gradient(#fbd9a0, #fdb548 60%, #fee08c);
}
.serif {
    font-family: "Liberation Serif", serif;
    font-size: 14px;
    font-weight: bold;
    color: #111;
}
.serif sup {
    font-size: 8px;
    line-height: 8px;
    align-self: flex-start;
    color: #2d4f88;
}
.serif.lg {
    font-size: 16px;
}
.it {
    font-style: italic;
}
.un {
    text-decoration: underline;
}
.box svg text {
    fill: #111;
    font-family: "Liberation Sans", sans-serif;
    font-weight: bold;
}
.num {
    color: #111;
    font-size: 12px;
}
.num.narrow {
    font-size: 10px;
}
.menu {
    display: flex;
    flex-direction: column;
    justify-content: space-around;
    align-items: flex-start;
    padding: 1px 3px 1px 5px;
}
.menu button {
    gap: 2px;
    height: 18px;
}

/* formula bar */
.formula {
    display: flex;
    align-items: center;
    flex: none;
    height: 21px;
    background: #fff;
    border-bottom: 1px solid #7d9cc4;
}
.name {
    width: 134px;
    text-align: center;
    font-size: 12px;
    color: #000;
}
.fx {
    width: 79px;
    height: 20px;
    margin-left: 7px;
    padding: 0 6px 0 4px;
    justify-content: space-between;
    border: 1px solid #8fadd6;
    border-right: 1px solid #6585b2;
    border-radius: 10px 0 0 10px;
    background: linear-gradient(#edf4fd, #a9c6ec);
}
.fx b {
    width: 9px;
    height: 9px;
    border-radius: 50%;
    background: radial-gradient(#fff, #a9bdd8);
}
.fx em {
    font-family: "Liberation Serif", serif;
    font-size: 14px;
    font-weight: bold;
    color: #35415a;
}
.bar {
    flex: 1;
    min-width: 0;
    height: 20px;
}
.expand {
    width: 15px;
    height: 20px;
    border: 1px solid #7d9cc4;
    background: #d5e5f8;
}

/* worksheet */
.workspace {
    display: flex;
    flex: 1;
    min-height: 0;
    border-top: 3px solid #cfe2f8;
}
.sheet {
    position: relative;
    flex: 1;
    min-width: 0;
    overflow: hidden;
    background: #fff;
    font-family: Lato, "Liberation Sans", sans-serif;
    font-size: 12px;
}
table {
    width: 100%;
    table-layout: fixed;
    border-collapse: separate;
    border-spacing: 0;
    color: #000;
}
.c-head { width: 24px; }
.c-a { width: 90px; }
.c-34 { width: 34px; }
.c-33 { width: 33px; }
.c-k { width: 41px; }
.c-m { width: 122px; }
.c-n { width: 70px; }
.c-o { width: 62px; }
.c-p { width: 67px; }
td, th {
    height: 17px;
    padding: 0;
    line-height: 14px;
    text-align: center;
    white-space: nowrap;
    overflow: hidden;
    border-right: 1px solid #d4dbe6;
    border-bottom: 1px solid #d4dbe6;
}
tbody tr:nth-child(8n) > * {
    height: 16px;
}
th {
    font-weight: normal;
    color: #2c3d5c;
    background: #e4ecf7;
    border-color: #9eb6ce;
}
thead th {
    height: 16px;
    background: linear-gradient(#f5f8fc, #cfdaea);
}
th.sel {
    background: linear-gradient(#f9d99f, #f1c15f);
    border-color: #d59a3e;
}
.corner {
    background: linear-gradient(135deg, #a9c4e9 60%, #dce8f8 60%);
}
.r-title > * {
    height: 24px;
}
.r-sub > *, .r-items > * {
    height: 18px;
}
.r-title td:nth-child(3), .r-sub td:nth-child(3) {
    border-right: 2px solid #000;
    border-bottom: 2px solid #000;
    background: #92d050;
    font-size: 16px;
    font-weight: bold;
    font-style: italic;
}
.r-sub td:nth-child(3) {
    background: #00b0f0;
    color: #10253f;
    font: bold 12px "Liberation Serif", serif;
    line-height: 14px;
}
.r-title td:nth-child(2), .r-sub td:nth-child(2) {
    border-right: 2px solid #000;
}
.r-sub td:nth-child(2) {
    border-bottom: 2px solid #000;
}
.r-items td:nth-child(-n+12) {
    border-right: 1px solid #000;
    border-bottom: 2px solid #000;
    background: #ff0;
}
.r-items td:nth-child(2) {
    border-right: 2px solid #000;
    background: #00b0f0;
    color: #10253f;
    font: bold 12px "Liberation Serif", serif;
}
.r-data td:nth-child(-n+12),
.r-total td:nth-child(-n+13),
.r-sum td:nth-child(n+3):nth-child(-n+13),
.last td:nth-child(13) {
    border-right: 1px solid #000;
    border-bottom: 1px solid #000;
}
.r-data td:nth-child(2), .r-data td:nth-child(12), .r-items td:nth-child(12) {
    border-right: 2px solid #000;
}
.r-total td:nth-child(-n+13) {
    background: #c6d9f1;
}
.r-sum td:nth-child(n+3):nth-child(-n+13), .last td:nth-child(13) {
    background: #ff0;
}
.r-sum td:nth-child(2) {
    border-right-color: #000;
}

/* charts floating over the cells */
.chart {
    position: absolute;
    color: #000;
}
.chart text {
    font-size: 11px;
    fill: #000;
}
.chart h3 {
    position: absolute;
    left: 0;
    right: 0;
    text-align: center;
}
.chart-line {
    left: 37px;
    top: 510px;
    width: 455px;
    height: 100px;
    background: #fff;
    border: 1px solid #868686;
}
.chart-bars {
    left: 505px;
    top: 15px;
    width: 403px;
    height: 249px;
    background: #c6d9f1;
    border: 2px solid #000;
}
.chart-bars h3 {
    top: 6px;
    color: #e01022;
    font-size: 19px;
    font-weight: bold;
    line-height: 26px;
}
.chart-pie {
    left: 505px;
    top: 274px;
    width: 404px;
    height: 260px;
    background: #93cddd;
    border: 1px solid #7aa3ae;
}
.chart-pie h3 {
    top: 3px;
    color: #0070c0;
    font-family: Inter, "Open Sans", sans-serif;
    font-size: 22px;
    font-weight: 900;
    line-height: 26px;
}
.legend {
    position: absolute;
    left: 0;
    right: 0;
    top: 48px;
    display: flex;
    justify-content: center;
    gap: 12px;
    list-style: none;
    font-size: 11px;
    line-height: 14px;
}
.legend li::before {
    content: "";
    display: inline-block;
    width: 6px;
    height: 6px;
    margin-right: 3px;
}
.l-blue::before { background: #4676ae; }
.l-red::before { background: #b54a48; }
.l-green::before { background: #93b14d; }
.l-purple::before { background: #7d5b9f; }

/* scroll bars */
.vscroll {
    display: flex;
    flex-direction: column;
    width: 14px;
    background: #83a5d6;
    border-left: 1px solid #6b8cba;
}
.splitter {
    height: 8px;
    background: #e9f2fd;
    border: 1px solid #6b8cba;
}
.vscroll button {
    height: 15px;
    background: linear-gradient(90deg, #eef5fe, #bdd3ef);
    border: 1px solid #7d9cc4;
}
.vscroll button i {
    border: 4px solid transparent;
    border-top-width: 0;
    border-bottom-color: #34435e;
}
.vscroll .down i {
    border-width: 4px 4px 0;
    border-top-color: #34435e;
}
.vscroll .track {
    flex: 1;
    display: flex;
    padding: 27px 0 57px;
}
.thumb {
    flex: 1;
    display: flex;
    align-items: center;
    justify-content: center;
    border: 1px solid #6f90c0;
    border-radius: 2px;
    background: linear-gradient(90deg, #dceafc, #b3d0f6);
}
.thumb::after {
    content: "";
    width: 7px;
    height: 7px;
    background: repeating-linear-gradient(#6f90c0 0 1px, transparent 1px 3px);
}
.sheetbar {
    display: flex;
    flex: none;
    height: 15px;
    background: #9fbde6;
    border-bottom: 1px solid #6f90c0;
}
.nav {
    display: flex;
    gap: 5px;
    padding: 0 4px;
    width: 59px;
    background: #d3e4f9;
    border-right: 1px solid #8fadd6;
    fill: #17346c;
}
.sheets {
    display: flex;
    font-family: Lato, sans-serif;
    font-size: 12px;
    line-height: 14px;
}
.sheets button {
    padding: 0 10px 0 14px;
    color: #27508f;
    background: linear-gradient(120deg, #c3d9f6, #dceafb 80%);
    border-right: 1px solid #8fadd6;
}
.sheets .active {
    padding: 0 3px 0 8px;
    font-size: 13px;
    font-weight: bold;
    color: #15306a;
    background: #fff;
}
.hscroll {
    display: flex;
    align-items: center;
    width: 391px;
    margin-left: auto;
    padding-right: 15px;
    background: #83a5d6;
}
.handle {
    width: 6px;
    height: 12px;
    background: #e9f2fd;
    border: 1px solid #6b8cba;
}
.left, .right {
    margin: 0 8px;
    border: 4px solid transparent;
    border-left-width: 0;
    border-right-color: #34507f;
}
.right {
    border-width: 4px 0 4px 5px;
    border-left-color: #34507f;
}
.hscroll .track {
    flex: 1;
    display: flex;
    height: 14px;
    padding-right: 48px;
}
.hscroll .thumb {
    background: linear-gradient(#e3effd, #b9d2f4);
}
.hscroll .thumb::after {
    background: repeating-linear-gradient(90deg, #6f90c0 0 1px, transparent 1px 3px);
}

/* status bar */
.status {
    display: flex;
    align-items: center;
    flex: none;
    height: 20px;
    padding: 0 5px 0 7px;
    background: linear-gradient(#dce9fb, #b4cff2 50%, #c5dbf7);
}
.views {
    display: flex;
    margin-left: auto;
    height: 18px;
    border: 1px solid #8fadd6;
}
.views button {
    padding: 0 2px;
    align-self: stretch;
}
.pct {
    margin: 0 12px 0 8px;
}
#zoom {
    width: 94px;
    height: 15px;
    appearance: none;
    background: linear-gradient(#6583ae, #6583ae) center / 100% 1px no-repeat;
}
#zoom::-webkit-slider-thumb {
    appearance: none;
    width: 9px;
    height: 12px;
    background: #e9f2fd;
    border: 1px solid #4d617f;
    border-radius: 1px 1px 5px 5px;
}
```
